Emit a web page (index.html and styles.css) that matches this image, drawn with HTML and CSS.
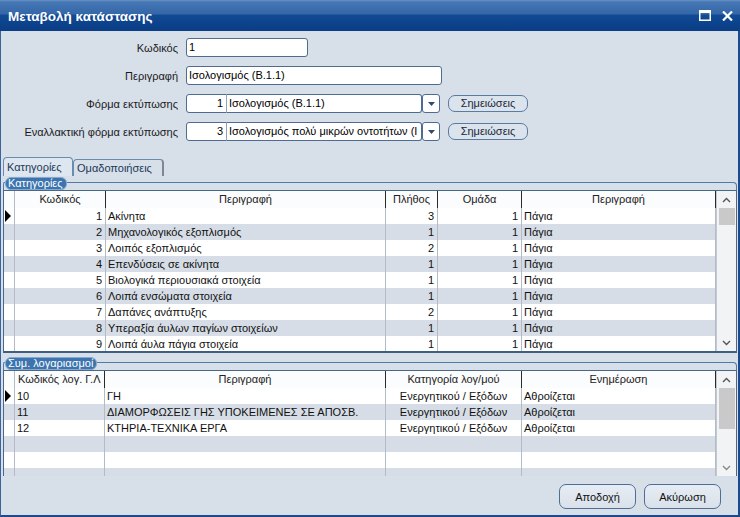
FILE: index.html
```html
<!DOCTYPE html>
<html lang="el">
<head>
<meta charset="utf-8">
<title>Μεταβολή κατάστασης</title>
<link rel="stylesheet" href="styles.css">
</head>
<body>
<div class="window">
  <div class="titlebar">
    <span class="title">Μεταβολή κατάστασης</span>
    <div class="tb-icons">
      <svg class="ic-max" width="12" height="11" viewBox="0 0 12 11"><rect x="0.75" y="0.75" width="10.5" height="9.5" fill="none" stroke="#fff" stroke-width="1.5"/><rect x="0" y="0" width="12" height="3" fill="#fff"/></svg>
      <svg class="ic-close" width="11" height="10" viewBox="0 0 11 10"><path d="M1 0.5 L10 9.5 M10 0.5 L1 9.5" stroke="#fff" stroke-width="2.2" fill="none"/></svg>
    </div>
  </div>

  <div class="form">
    <label class="lbl">Κωδικός</label>
    <div class="fld"><div class="input w-code">1</div></div>

    <label class="lbl">Περιγραφή</label>
    <div class="fld"><div class="input w-desc">Ισολογισμός (B.1.1)</div></div>

    <label class="lbl">Φόρμα εκτύπωσης</label>
    <div class="fld">
      <div class="input num">1</div>
      <div class="input combo">Ισολογισμός (B.1.1)</div>
      <div class="dd"><svg width="7" height="4" viewBox="0 0 7 4"><path d="M0 0 H7 L3.5 4 Z" fill="#2d4c70"/></svg></div>
      <button class="btn-small">Σημειώσεις</button>
    </div>

    <label class="lbl">Εναλλακτική φόρμα εκτύπωσης</label>
    <div class="fld">
      <div class="input num">3</div>
      <div class="input combo">Ισολογισμός πολύ μικρών οντοτήτων (Ι</div>
      <div class="dd"><svg width="7" height="4" viewBox="0 0 7 4"><path d="M0 0 H7 L3.5 4 Z" fill="#2d4c70"/></svg></div>
      <button class="btn-small">Σημειώσεις</button>
    </div>
  </div>

  <div class="tabs">
    <div class="tab active">Κατηγορίες</div>
    <div class="tab">Ομαδοποιήσεις</div>
  </div>

  <div class="group">
    <div class="group-head"><span class="gcorner"></span><span class="pill">Κατηγορίες</span><span class="gline"></span></div>
    <div class="grid g1">
      <div class="gtable">
        <div class="row head">
          <div class="c"></div><div class="c">Κωδικός</div><div class="c">Περιγραφή</div><div class="c">Πλήθος</div><div class="c">Ομάδα</div><div class="c">Περιγραφή</div>
        </div>
        <div class="row"><div class="c ind"><span class="arrow"></span></div><div class="c r">1</div><div class="c">Ακίνητα</div><div class="c r">3</div><div class="c r">1</div><div class="c">Πάγια</div></div>
        <div class="row alt"><div class="c ind"></div><div class="c r">2</div><div class="c">Μηχανολογικός εξοπλισμός</div><div class="c r">1</div><div class="c r">1</div><div class="c">Πάγια</div></div>
        <div class="row"><div class="c ind"></div><div class="c r">3</div><div class="c">Λοιπός εξοπλισμός</div><div class="c r">2</div><div class="c r">1</div><div class="c">Πάγια</div></div>
        <div class="row alt"><div class="c ind"></div><div class="c r">4</div><div class="c">Επενδύσεις σε ακίνητα</div><div class="c r">1</div><div class="c r">1</div><div class="c">Πάγια</div></div>
        <div class="row"><div class="c ind"></div><div class="c r">5</div><div class="c">Βιολογικά περιουσιακά στοιχεία</div><div class="c r">1</div><div class="c r">1</div><div class="c">Πάγια</div></div>
        <div class="row alt"><div class="c ind"></div><div class="c r">6</div><div class="c">Λοιπά ενσώματα στοιχεία</div><div class="c r">1</div><div class="c r">1</div><div class="c">Πάγια</div></div>
        <div class="row"><div class="c ind"></div><div class="c r">7</div><div class="c">Δαπάνες ανάπτυξης</div><div class="c r">2</div><div class="c r">1</div><div class="c">Πάγια</div></div>
        <div class="row alt"><div class="c ind"></div><div class="c r">8</div><div class="c">Υπεραξία άυλων παγίων στοιχείων</div><div class="c r">1</div><div class="c r">1</div><div class="c">Πάγια</div></div>
        <div class="row"><div class="c ind"></div><div class="c r">9</div><div class="c">Λοιπά άυλα πάγια στοιχεία</div><div class="c r">1</div><div class="c r">1</div><div class="c">Πάγια</div></div>
      </div>
      <div class="vscroll">
        <svg class="chev" width="9" height="6" viewBox="0 0 9 6"><path d="M1 5 L4.5 1.5 L8 5" stroke="#555" stroke-width="1.4" fill="none"/></svg>
        <div class="thumb t1"></div>
        <div class="track"></div>
        <svg class="chev" width="9" height="6" viewBox="0 0 9 6"><path d="M1 1 L4.5 4.5 L8 1" stroke="#555" stroke-width="1.4" fill="none"/></svg>
      </div>
    </div>
  </div>

  <div class="group g2wrap">
    <div class="group-head"><span class="gcorner"></span><span class="pill">Συμ. λογαριασμοί</span><span class="gline"></span></div>
    <div class="grid g2">
      <div class="gtable">
        <div class="row head">
          <div class="c"></div><div class="c l">Κωδικός λογ. Γ.Λ</div><div class="c">Περιγραφή</div><div class="c">Κατηγορία λογ/μού</div><div class="c">Ενημέρωση</div>
        </div>
        <div class="row"><div class="c ind"><span class="arrow"></span></div><div class="c">10</div><div class="c">ΓΗ</div><div class="c m">Ενεργητικού / Εξόδων</div><div class="c">Αθροίζεται</div></div>
        <div class="row alt"><div class="c ind"></div><div class="c">11</div><div class="c">ΔΙΑΜΟΡΦΩΣΕΙΣ ΓΗΣ ΥΠΟΚΕΙΜΕΝΕΣ ΣΕ ΑΠΟΣΒ.</div><div class="c m">Ενεργητικού / Εξόδων</div><div class="c">Αθροίζεται</div></div>
        <div class="row"><div class="c ind"></div><div class="c">12</div><div class="c">ΚΤΗΡΙΑ-ΤΕΧΝΙΚΑ ΕΡΓΑ</div><div class="c m">Ενεργητικού / Εξόδων</div><div class="c">Αθροίζεται</div></div>
        <div class="row alt"><div class="c ind"></div><div class="c"></div><div class="c"></div><div class="c"></div><div class="c"></div></div>
        <div class="row"><div class="c ind"></div><div class="c"></div><div class="c"></div><div class="c"></div><div class="c"></div></div>
        <div class="row alt"><div class="c ind"></div><div class="c"></div><div class="c"></div><div class="c"></div><div class="c"></div></div>
      </div>
      <div class="vscroll">
        <svg class="chev" width="9" height="6" viewBox="0 0 9 6"><path d="M1 5 L4.5 1.5 L8 5" stroke="#555" stroke-width="1.4" fill="none"/></svg>
        <div class="thumb t2"></div>
        <div class="track"></div>
        <svg class="chev" width="9" height="6" viewBox="0 0 9 6"><path d="M1 1 L4.5 4.5 L8 1" stroke="#888" stroke-width="1.4" fill="none"/></svg>
      </div>
    </div>
  </div>

  <div class="footer">
    <button class="btn">Αποδοχή</button>
    <button class="btn">Ακύρωση</button>
  </div>
</div>
</body>
</html>
```

FILE: styles.css
```css
* { box-sizing: border-box; }
html, body { margin: 0; padding: 0; }
body {
  width: 740px;
  height: 517px;
  overflow: hidden;
  font-family: "Liberation Sans", Arial, sans-serif;
  font-size: 11px;
  color: #000;
  background: #d7dfe9;
}
.window {
  width: 740px;
  height: 517px;
  display: flex;
  flex-direction: column;
  background: #d7dfe9;
  border-left: 1px solid #3a63a0;
  border-right: 2px solid #1c4a8a;
  border-bottom: 2px solid #1c4a8a;
}

/* title bar */
.titlebar {
  flex: none;
  height: 31px;
  margin-left: -1px;
  margin-right: -2px;
  display: flex;
  align-items: center;
  justify-content: space-between;
  padding: 2px 7px 0 8px;
  background: linear-gradient(to bottom, #6a92c6 0px, #4677b5 2px, #3467a9 14px, #124a93 15px, #0c428c 24px, #0a3d86 31px);
}
.title {
  color: #fff;
  font-weight: bold;
  font-size: 13.5px;
}
.tb-icons { display: flex; align-items: center; gap: 11px; margin-top: -2px; }

/* form */
.form {
  display: grid;
  grid-template-columns: 177px auto;
  column-gap: 8px;
  row-gap: 9px;
  padding-top: 7px;
}
.lbl {
  text-align: right;
  align-self: center;
  color: #1a1a1a;
  white-space: nowrap;
}
.fld { display: flex; align-items: center; height: 19px; }
.input {
  height: 19px;
  background: #fff;
  border: 1px solid #4d6c90;
  border-radius: 3px;
  padding: 0 2px;
  line-height: 17px;
  white-space: nowrap;
  overflow: hidden;
}
.w-code { width: 122px; }
.w-desc { width: 256px; }
.num { width: 41px; text-align: right; padding-right: 3px; border-radius: 3px 0 0 3px; }
.combo { width: 196px; border-radius: 0 3px 3px 0; border-left-color: #8fa3ba; margin-left: -1px; }
.dd {
  width: 18px;
  height: 19px;
  border: 1px solid #4d6c90;
  border-radius: 3px;
  background: #fff;
  display: flex;
  align-items: center;
  justify-content: center;
}
.btn-small {
  margin-left: 8px;
  width: 80px;
  height: 17px;
  padding: 0;
  font: inherit;
  color: #1a2a3a;
  background: #dbe3ec;
  border: 1px solid #5a7ba2;
  border-radius: 7px;
  line-height: 15px;
}

/* tabs */
.tabs {
  display: flex;
  align-items: flex-end;
  height: 19px;
  margin-top: 16px;
  padding-left: 2px;
}
.tab {
  height: 17px;
  padding: 0 4px 0 3px;
  border: 1px solid #6a8bb0;
  border-bottom: none;
  border-radius: 4px 4px 0 0;
  color: #203a58;
  line-height: 16px;
  background: #d7dfe9;
  border-right: 2px solid #7d8894;
}
.tab.active {
  height: 19px;
  width: 70px;
  background: #dee6ef;
  border-right: 1px solid #6a8bb0;
  line-height: 18px;
}
.tab + .tab { width: 91px; }

/* groups */
.group { margin-left: 2px; width: 734px; }
.group-head {
  height: 14px;
  display: flex;
  align-items: center;
}
.gcorner {
  align-self: flex-end;
  width: 2px;
  height: 8px;
  border-top: 1px solid #4f7aab;
  border-left: 1px solid #4f7aab;
  border-top-left-radius: 2px;
}
.pill {
  height: 13px;
  padding: 0 3px 0 2px;
  background: #3b74ae;
  color: #fff;
  border-radius: 6px;
  line-height: 11px;
  white-space: nowrap;
  border: 1px solid #86a9cd;
}
.gline {
  flex: 1;
  align-self: flex-end;
  height: 8px;
  border-top: 1px solid #4f7aab;
  border-right: 1px solid #4f7aab;
  border-top-right-radius: 4px;
}

.grid {
  display: flex;
  border: 1px solid #4a6787;
  background: #fff;
  overflow: hidden;
}
.g1 { height: 163px; border-bottom: 2px solid #3e5e82; }
.g2wrap { margin-top: 3px; }
.g2 { height: 106px; border-bottom: none; }

.gtable { width: 712px; flex: none; }
.row { display: grid; height: 16px; background: #fff; }
.g1 .row { grid-template-columns: 11px 91px 280px 52px 84px 194px; }
.g2 .row { grid-template-columns: 11px 90px 281px 136px 194px; }
.row.alt { background: #d6dde6; }
.row.head { height: 17px; background: #fbfcfd; }
.c {
  border-right: 1px solid #b3bcc6;
  padding: 0 2px;
  line-height: 16px;
  white-space: nowrap;
  overflow: hidden;
  color: #111;
}
.head .c {
  text-align: center;
  border-right: 1px solid #2a2a2a;
  line-height: 17px;
  color: #222;
}
.head .c:first-child { border-right: 1px solid #b3bcc6; }
.head .c.l { text-align: left; padding-left: 3px; }
.c.r { text-align: right; padding-right: 3px; }
.c.m { text-align: center; }
.c.ind { position: relative; padding: 0; }
.arrow {
  position: absolute;
  left: 1px;
  top: 2px;
  width: 0;
  height: 0;
  border-top: 6px solid transparent;
  border-bottom: 6px solid transparent;
  border-left: 6px solid #000;
}

.vscroll {
  width: 20px;
  flex: none;
  display: flex;
  flex-direction: column;
  align-items: center;
  background: #f1f3f5;
  border-left: 1px solid #c3c9d0;
}
.chev { flex: none; margin: 6px 0 5px; }
.thumb { flex: none; width: 16px; background: #c9c9c9; }
.t1 { height: 17px; }
.t2 { height: 41px; }
.track { flex: 1; }

/* footer */
.footer {
  display: flex;
  justify-content: flex-end;
  gap: 8px;
  padding: 8px 17px 0 0;
}
.btn {
  width: 77px;
  height: 25px;
  padding: 0;
  font: inherit;
  color: #111;
  background: linear-gradient(to bottom, #e6ecf3, #d9e1ea);
  border: 1px solid #4e6f95;
  border-radius: 7px;
}
```
